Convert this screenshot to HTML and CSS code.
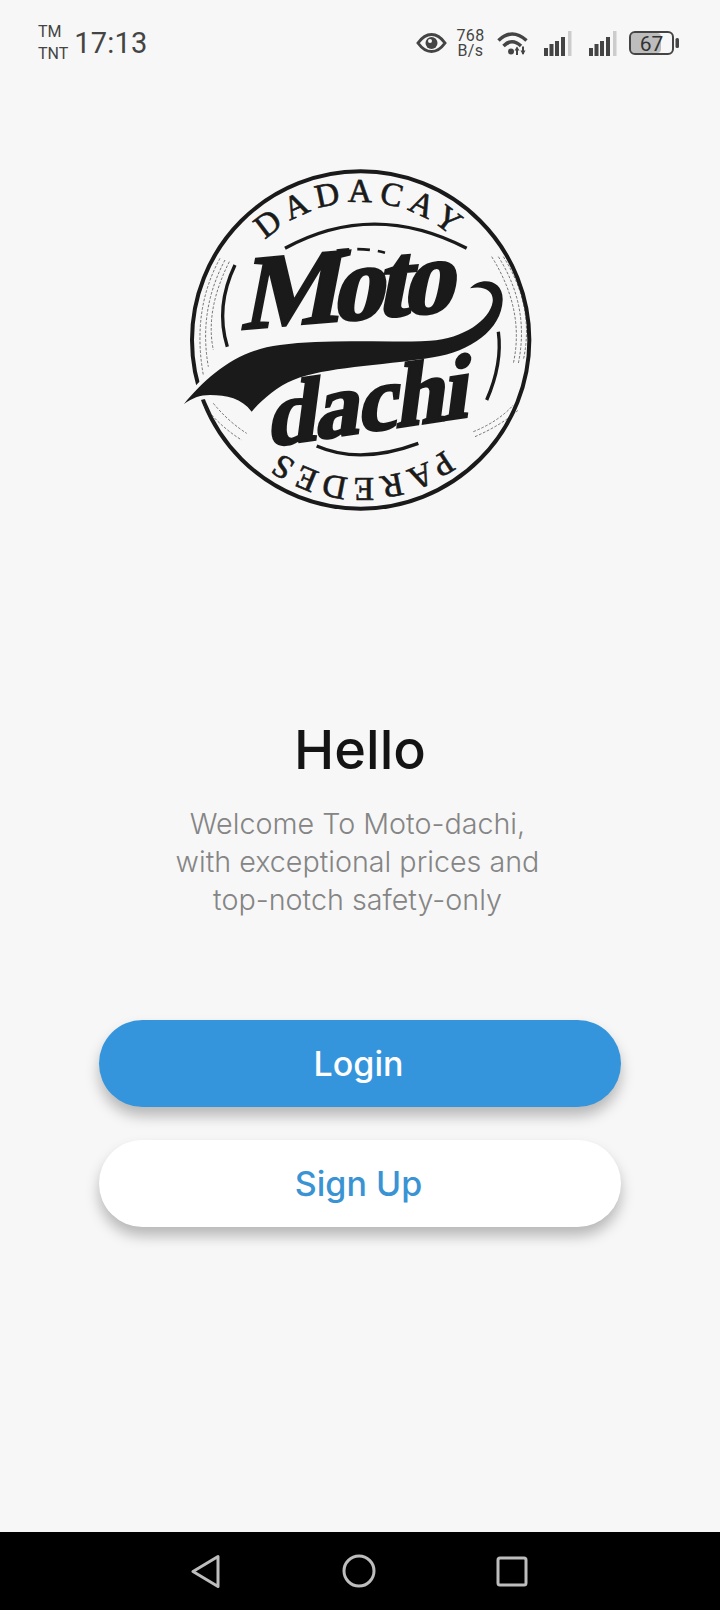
FILE: index.html
```html
<!DOCTYPE html>
<html lang="en">
<head>
<meta charset="utf-8">
<title>Moto-dachi</title>
<link rel="stylesheet" href="styles.css">
</head>
<body>
<div class="screen">
  <header class="status">
    <div class="status-left">
      <div class="carriers"><span>TM</span><span>TNT</span></div>
      <div class="time">17:13</div>
    </div>
    <div class="status-right">
      <svg class="eye" width="31" height="20" viewBox="0 0 31 20"><path d="M2 10C7 3 11 1.500 15.500 1.500S24 3 29 10C24 17 20 18.500 15.500 18.500S7 17 2 10Z" fill="none" stroke="#444" stroke-width="3"/><circle cx="15.500" cy="10" r="6" fill="#444"/><circle cx="14" cy="8" r="2" fill="#f7f7f7"/></svg>
      <div class="speed"><span>768</span><span>B/s</span></div>
      <svg class="wifi" width="31" height="24" viewBox="0 0 31 24"><g fill="none" stroke="#444" stroke-width="3.500"><path d="M1.500 9.500Q15 -3.500 29.500 9.500"/><path d="M6.500 15Q15 6.500 24 15"/></g><circle cx="14" cy="20.500" r="3" fill="#444"/><path d="M19 24V16.500H21V24ZM17.500 19.500L20 15.500L22.500 19.500ZM25 15.500H27V23H25ZM23.500 19.500H28.500L26 24Z" fill="#444"/></svg>
      <svg class="signal" width="28" height="25" viewBox="0 0 28 25"><g fill="#444"><rect x="0" y="17" width="4" height="8"/><rect x="5.500" y="13" width="4" height="12"/><rect x="11" y="10" width="4" height="15"/><rect x="17" y="6" width="4" height="19"/></g><rect x="24" y="0" width="3.500" height="25" fill="#ccc"/></svg>
      <svg class="signal2" width="28" height="25" viewBox="0 0 28 25"><g fill="#444"><rect x="0" y="17" width="4" height="8"/><rect x="5.500" y="13" width="4" height="12"/><rect x="11" y="10" width="4" height="15"/><rect x="17" y="6" width="4" height="19"/></g><rect x="24" y="0" width="3.500" height="25" fill="#ccc"/></svg>
      <svg class="battery" width="50" height="24" viewBox="0 0 50 24"><rect x="2" y="2" width="30" height="20" rx="4" fill="#bdbdbd"/><rect x="1" y="1" width="43" height="22" rx="5" fill="none" stroke="#444" stroke-width="2"/><rect x="46.500" y="7" width="3.500" height="10" rx="1.500" fill="#444"/><text x="22.500" y="20" text-anchor="middle" class="battery-text">67</text></svg>
    </div>
  </header>

  <main class="content">
    <svg class="logo" width="380" height="380" viewBox="0 0 1140 1140" role="img" aria-label="Moto-dachi logo">
      <defs>
        <path id="ring" d="M158 570A414 414 0 1 1 986 570A414 414 0 1 1 158 570"/>
      </defs>
      <circle cx="572" cy="570" r="506" fill="none" stroke="#1a1a1a" stroke-width="12"/>
      <text class="ring-text ring-top"><textPath href="#ring" startOffset="25%">DADACAY</textPath></text>
      <text class="ring-text ring-bottom"><textPath href="#ring" startOffset="75%">PAREDES</textPath></text>

      <g fill="none" stroke="#1a1a1a" stroke-width="10">
        <path d="M345 295Q610 150 890 295"/>
        <path d="M195 345Q135 470 172 590"/>
        <path d="M985 545Q998 640 950 750"/>
        <path d="M440 888Q570 945 745 880"/>
      </g>
      <path d="M500 302Q575 290 645 308" fill="none" stroke="#1a1a1a" stroke-width="8" stroke-dasharray="38 24"/>
      <g fill="none" stroke="#333" stroke-width="2" stroke-dasharray="8 5">
        <path d="M150 325Q65 480 100 675"/>
        <path d="M165 330Q85 480 115 650"/>
        <path d="M178 335Q105 480 130 600"/>
        <path d="M965 320Q1065 480 1030 640"/>
        <path d="M985 320Q1080 470 1045 640"/>
        <path d="M1000 320Q1095 470 1060 630"/>
        <path d="M100 765Q150 830 215 870"/>
        <path d="M130 760Q175 815 230 850"/>
        <path d="M910 845Q985 815 1030 765"/>
        <path d="M915 860Q995 825 1045 780"/>
      </g>
      <path class="swoosh-halo" d="M42 762C110 680 200 600 330 585C480 565 640 580 780 572C880 566 960 510 968 455C972 425 945 405 900 415C930 380 1000 385 998 450C995 540 900 605 790 622C620 650 470 650 370 690C320 710 275 750 245 785C215 745 170 735 120 735C90 735 65 745 42 762Z"/>
      <path class="swoosh" d="M42 762C110 680 200 600 330 585C480 565 640 580 780 572C880 566 960 510 968 455C972 425 945 405 900 415C930 380 1000 385 998 450C995 540 900 605 790 622C620 650 470 650 370 690C320 710 275 750 245 785C215 745 170 735 120 735C90 735 65 745 42 762Z"/>
      <text class="script moto" transform="translate(212 538) rotate(-5) skewX(-16)">Moto</text>
      <text class="script dachi" transform="translate(290 890) rotate(-8.500) skewX(-16)">dachi</text>
    </svg>

    <h1 class="title">Hello</h1>
    <p class="subtitle">Welcome To Moto-dachi,<br>with exceptional prices and<br>top-notch safety-only</p>

    <div class="actions">
      <a class="btn btn-primary">Login</a>
      <a class="btn btn-secondary">Sign Up</a>
    </div>
  </main>

  <nav class="navbar">
    <svg width="30" height="35" viewBox="0 0 30 35"><path d="M27 2.500V32.500L2 17.500Z" fill="none" stroke="#bdbdbd" stroke-width="3" stroke-linejoin="round"/></svg>
    <svg width="34" height="34" viewBox="0 0 34 34"><circle cx="17" cy="17" r="15" fill="none" stroke="#bdbdbd" stroke-width="3"/></svg>
    <svg width="32" height="31" viewBox="0 0 32 31"><rect x="2" y="2" width="28" height="27" rx="2" fill="none" stroke="#bdbdbd" stroke-width="3"/></svg>
  </nav>
</div>
</body>
</html>
```

FILE: styles.css
```css
* { box-sizing: border-box; }
html, body { margin: 0; padding: 0; }
body { background: #f7f7f7; font-family: Inter, "Noto Sans", sans-serif; }

.screen {
  width: 720px;
  height: 1610px;
  display: flex;
  flex-direction: column;
  background: #f7f7f7;
  overflow: hidden;
}

.status {
  height: 80px;
  flex: none;
  padding: 6px 41px 0 38px;
  display: flex;
  justify-content: space-between;
  align-items: center;
  color: #444;
  font-family: Roboto, sans-serif;
}
.status-left { display: flex; align-items: center; gap: 6px; }
.carriers { display: flex; flex-direction: column; font-size: 16px; line-height: 22px; }
.time { font-size: 29px; line-height: 34px; letter-spacing: 0.2px; }
.status-right { display: flex; align-items: center; }
.eye { margin-right: 9px; }
.speed { display: flex; flex-direction: column; align-items: center; width: 29px; margin-right: 12px; font-size: 16px; line-height: 15px; letter-spacing: 0.4px; }
.wifi { margin-right: 16px; }
.signal { margin-right: 17px; }
.signal2 { margin-right: 12px; }
.battery-text { font-family: Roboto, sans-serif; font-size: 21px; fill: #333; }

.content {
  flex: 1;
  display: flex;
  flex-direction: column;
  align-items: center;
}
.logo { flex: none; margin-top: 70px; display: block; }
.ring-text { font-family: "Liberation Serif", serif; font-size: 100px; fill: #1a1a1a; stroke: #1a1a1a; stroke-width: 2px; text-anchor: middle; }
.ring-top { letter-spacing: 20px; }
.ring-bottom { letter-spacing: 15px; }
.script { font-family: "Liberation Serif", serif; font-weight: 700; fill: #1a1a1a; stroke: #1a1a1a; stroke-width: 8px; }
.moto { font-size: 315px; letter-spacing: -25px; }
.dachi { font-size: 270px; letter-spacing: -5px; }
.swoosh { fill: #1a1a1a; }
.swoosh-halo { fill: none; stroke: #f7f7f7; stroke-width: 22px; }

.title {
  margin: 190px 0 0;
  font-size: 54px;
  line-height: 60px;
  font-weight: 500;
  color: #141414;
}
.subtitle {
  margin: 25px 5px 0 0;
  text-align: center;
  font-size: 28.700px;
  line-height: 38px;
  font-weight: 300;
  color: #858585;
}
.actions {
  margin-top: 101px;
  display: flex;
  flex-direction: column;
  gap: 33px;
}
.btn {
  width: 522px;
  height: 87px;
  border-radius: 44px;
  display: flex;
  align-items: center;
  justify-content: center;
  font-size: 34px;
  font-weight: 450;
  padding-right: 3px;
  box-shadow: 0 9px 14px rgba(0, 0, 0, 0.26);
}
.btn-primary { background: #3595dc; color: #fff; }
.btn-secondary { background: #fff; color: #3a93d3; }

.navbar {
  height: 78px;
  flex: none;
  background: #000;
  display: flex;
  align-items: center;
  justify-content: space-between;
  padding: 0 192px 0 191px;
}
```
